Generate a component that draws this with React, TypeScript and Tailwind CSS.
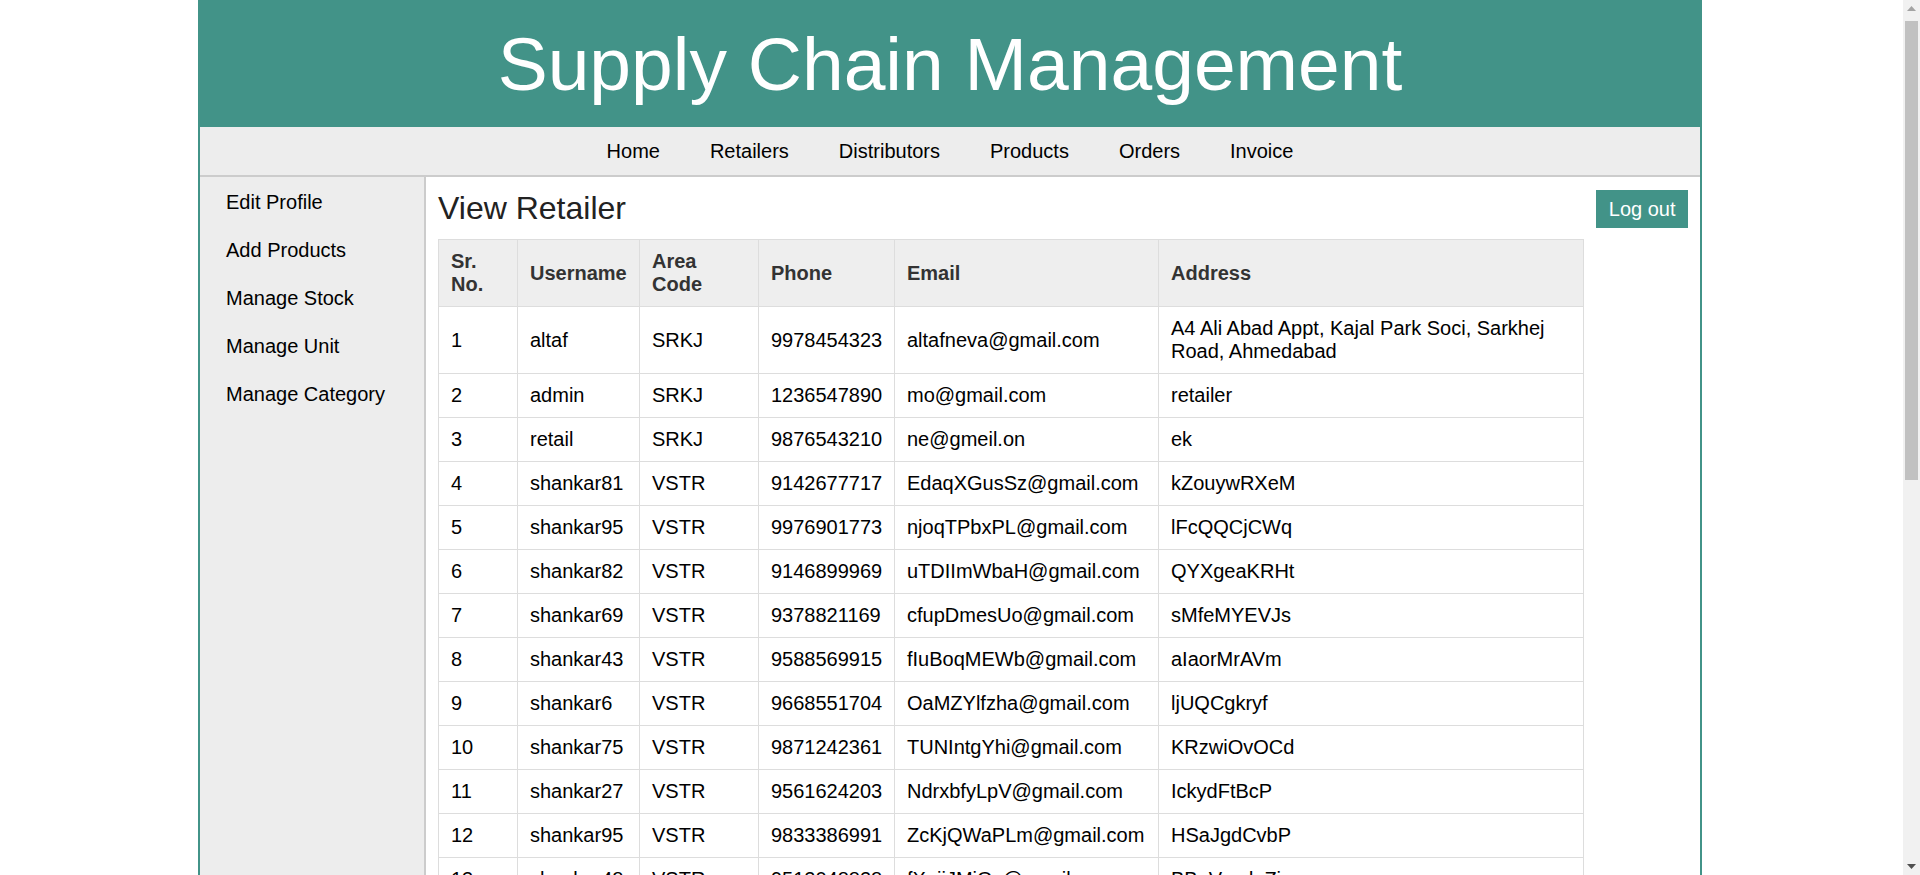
const NAV_LINKS = ["Home", "Retailers", "Distributors", "Products", "Orders", "Invoice"];

const SIDE_LINKS = ["Edit Profile", "Add Products", "Manage Stock", "Manage Unit", "Manage Category"];

const RETAILERS = [
  ["1", "altaf", "SRKJ", "9978454323", "altafneva@gmail.com", "A4 Ali Abad Appt, Kajal Park Soci, Sarkhej Road, Ahmedabad"],
  ["2", "admin", "SRKJ", "1236547890", "mo@gmail.com", "retailer"],
  ["3", "retail", "SRKJ", "9876543210", "ne@gmeil.on", "ek"],
  ["4", "shankar81", "VSTR", "9142677717", "EdaqXGusSz@gmail.com", "kZouywRXeM"],
  ["5", "shankar95", "VSTR", "9976901773", "njoqTPbxPL@gmail.com", "lFcQQCjCWq"],
  ["6", "shankar82", "VSTR", "9146899969", "uTDIImWbaH@gmail.com", "QYXgeaKRHt"],
  ["7", "shankar69", "VSTR", "9378821169", "cfupDmesUo@gmail.com", "sMfeMYEVJs"],
  ["8", "shankar43", "VSTR", "9588569915", "fIuBoqMEWb@gmail.com", "aIaorMrAVm"],
  ["9", "shankar6", "VSTR", "9668551704", "OaMZYlfzha@gmail.com", "ljUQCgkryf"],
  ["10", "shankar75", "VSTR", "9871242361", "TUNIntgYhi@gmail.com", "KRzwiOvOCd"],
  ["11", "shankar27", "VSTR", "9561624203", "NdrxbfyLpV@gmail.com", "IckydFtBcP"],
  ["12", "shankar95", "VSTR", "9833386991", "ZcKjQWaPLm@gmail.com", "HSaJgdCvbP"],
  ["13", "shankar48", "VSTR", "9512048828", "fXujiJMiQz@gmail.com", "BBaVcxdaZi"],
  ["14", "shankar17", "VSTR", "9724518830", "pLmQwErTyU@gmail.com", "XcVbNmQwEr"],
];

const COLUMNS = [
  { label: ["Sr.", "No."], width: "w-[79px]" },
  { label: ["Username"], width: "w-[122px]" },
  { label: ["Area", "Code"], width: "w-[119px]" },
  { label: ["Phone"], width: "w-[136px]" },
  { label: ["Email"], width: "w-[264px]" },
  { label: ["Address"], width: "w-[425px]" },
];

// Classic browser scrollbar as seen in the screenshot
function FakeScrollbar() {
  return (
    <div className="fixed top-0 right-0 w-[17px] h-screen bg-[#f1f1f1] flex flex-col">
      <div className="h-[17px] flex items-center justify-center">
        <svg width="9" height="5" viewBox="0 0 9 5">
          <polygon points="0,5 9,5 4.5,0" fill="#a3a3a3" />
        </svg>
      </div>
      <div className="flex-1 px-[2px] pt-[4px]">
        <div className="h-[459px] bg-[#c1c1c1]" />
      </div>
      <div className="h-[17px] flex items-center justify-center">
        <svg width="9" height="5" viewBox="0 0 9 5">
          <polygon points="0,0 9,0 4.5,5" fill="#505050" />
        </svg>
      </div>
    </div>
  );
}

export default function App() {
  return (
    <div className="min-h-screen bg-white pr-[17px] font-['Liberation_Sans',Arial,sans-serif] text-[20px] leading-[23px] text-black">
      <div className="ml-[198px] w-[1504px] border-x-2 border-[#429388] flex flex-col min-h-screen">
        {/* Header */}
        <header className="-mx-[2px] h-[127px] bg-[#429388] flex items-center justify-center pt-[1px]">
          <h1 className="text-white text-[75px] leading-[86px] font-normal">Supply Chain Management</h1>
        </header>

        {/* Top nav */}
        <nav className="h-[50px] bg-[#ededed] border-b-2 border-[#cccccc] flex justify-center items-start pt-[13px]">
          {NAV_LINKS.map((link) => (
            <a key={link} href="#" className="px-[25px] text-black">
              {link}
            </a>
          ))}
        </nav>

        <div className="flex flex-1">
          {/* Sidebar */}
          <aside className="w-[226px] shrink-0 bg-[#ededed] border-r-2 border-[#cccccc] pt-[1px]">
            <ul>
              {SIDE_LINKS.map((link) => (
                <li key={link} className="pl-[26px] py-3 leading-[24px]">
                  <a href="#" className="text-black">{link}</a>
                </li>
              ))}
            </ul>
          </aside>

          {/* Main */}
          <main className="flex-1 px-3 pt-[13px]">
            <div className="flex justify-between items-start">
              <h2 className="text-[32px] leading-[37px] text-[#222] font-normal">View Retailer</h2>
              <button className="bg-[#429388] text-white px-[12.5px] py-[7.5px] leading-[23px] text-[20px]">Log out</button>
            </div>

            <table className="mt-[11px] w-[1145px] table-fixed border-collapse">
              <thead>
                <tr>
                  {COLUMNS.map((col) => (
                    <th
                      key={col.label.join(" ")}
                      className={col.width + " border border-[#dddddd] bg-[#eeeeee] px-3 py-[10px] text-left align-middle font-bold text-[#333333]"}
                    >
                      {col.label.map((line) => (
                        <div key={line}>{line}</div>
                      ))}
                    </th>
                  ))}
                </tr>
              </thead>
              <tbody>
                {RETAILERS.map((row) => (
                  <tr key={row[0]}>
                    {row.map((cell, i) => (
                      <td key={i} className="border border-[#dddddd] px-3 py-[10px] align-middle">
                        {cell}
                      </td>
                    ))}
                  </tr>
                ))}
              </tbody>
            </table>
          </main>
        </div>
      </div>
      <FakeScrollbar />
    </div>
  );
}
